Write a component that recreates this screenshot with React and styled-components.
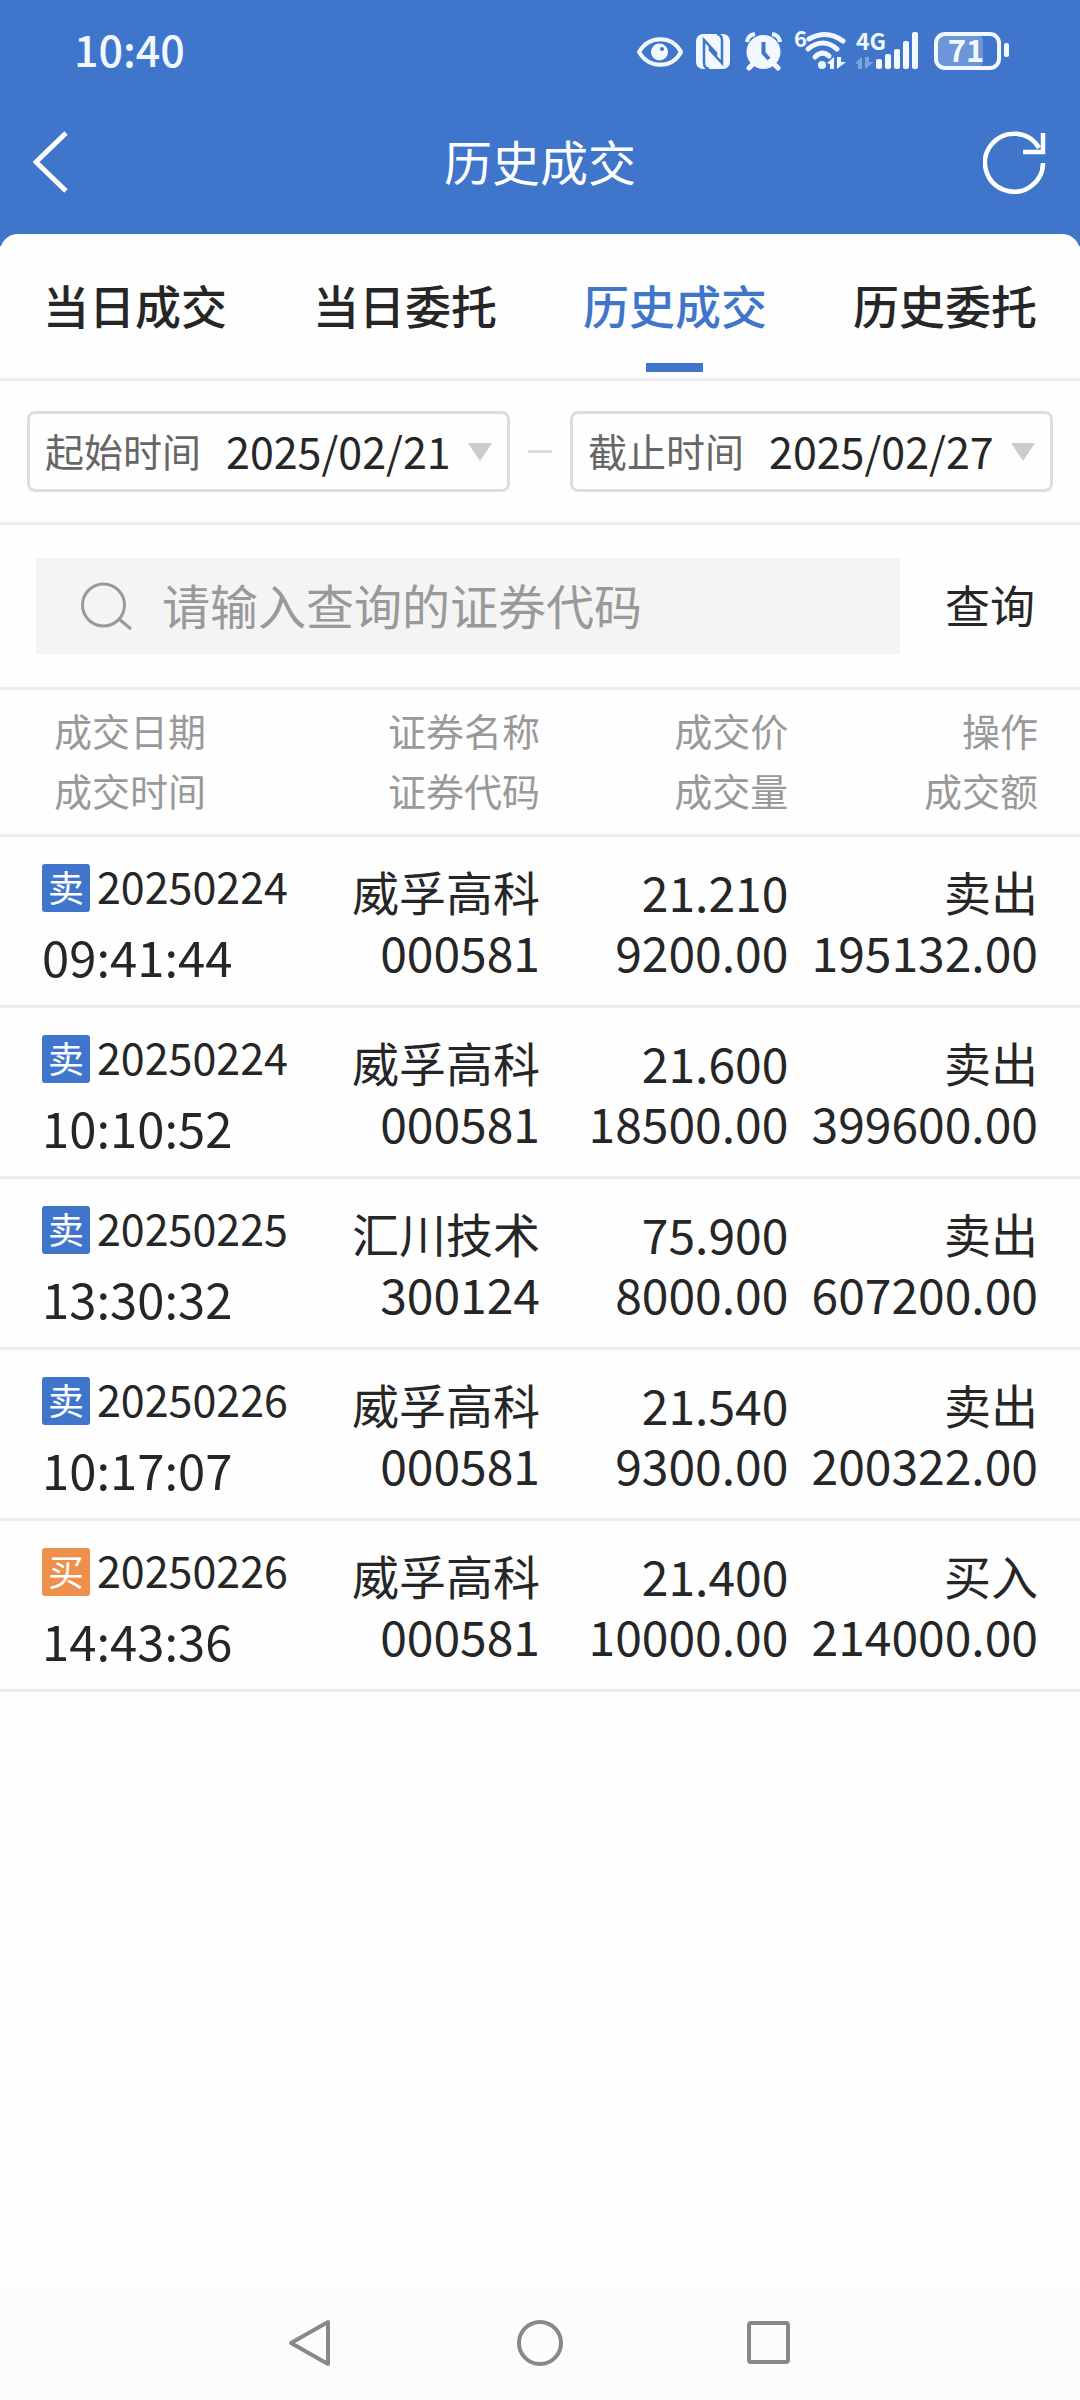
import React, { useState } from "react";
import styled, { createGlobalStyle } from "styled-components";

const blue = "#3f76cb";
const ink = "#262626";
const muted = "#999";
const line = "#ededed";
const statusInk = "#f2f8ff";
const sans = '"Noto Sans CJK SC", "Noto Sans", sans-serif';

const GlobalStyle = createGlobalStyle`
  *, *::before, *::after { box-sizing: border-box; }
  body { margin: 0; background: #fff; }
  button, input, select { margin: 0; padding: 0; border: 0; background: none; color: inherit; font: inherit; }
`;

const Page = styled.div`
  display: flex;
  flex-direction: column;
  min-height: 100vh;
  background: #fefefe;
  color: ${ink};
  font-family: ${sans};
`;

const Top = styled.header`
  padding-bottom: 24px;
  background: ${blue};
  color: #fff;
`;

const StatusBar = styled.div`
  display: flex;
  align-items: center;
  justify-content: space-between;
  height: 102px;
  padding: 0 71px 0 74px;
  color: ${statusInk};
`;

const Clock = styled.time`
  padding-bottom: 6px;
  font-size: 43px;
  font-weight: 500;
  line-height: 48px;
`;

const StatusIcons = styled.svg`
  display: block;
  width: 372px;
  height: 60px;
  font-family: ${sans};
  font-weight: 700;
`;

const TitleBar = styled.div`
  display: grid;
  grid-template-columns: 1fr auto 1fr;
  align-items: center;
  height: 120px;
  padding: 0 33px;
`;

const Title = styled.h1`
  margin: 0;
  padding-bottom: 4px;
  font-size: 48px;
  font-weight: 400;
  line-height: 60px;
`;

const IconButton = styled.button`
  display: block;
  justify-self: ${(p) => p.$side};
  cursor: pointer;
  svg { display: block; }
`;

const Sheet = styled.main`
  flex: 1;
  margin-top: -12px;
  border-radius: 18px 18px 0 0;
  background: #fefefe;
`;

const Tabs = styled.nav`
  display: grid;
  grid-template-columns: repeat(4, 1fr);
  height: 147px;
  border-bottom: 3px solid ${line};
`;

const Tab = styled.button`
  position: relative;
  padding-bottom: 4px;
  color: ${(p) => (p.$active ? blue : ink)};
  font-size: 46px;
  font-weight: 500;
  cursor: pointer;

  &::after {
    content: "";
    position: absolute;
    bottom: 6px;
    left: 50%;
    width: 57px;
    height: 9px;
    margin-left: -29px;
    background: ${(p) => (p.$active ? blue : "transparent")};
  }
`;

const DateRow = styled.div`
  display: flex;
  align-items: center;
  gap: 18px;
  padding: 30px 27px;
  border-bottom: 3px solid ${line};
`;

const Dash = styled.span`
  width: 24px;
  height: 3px;
  background: #ddd;
`;

const DateField = styled.div`
  display: flex;
  flex: 1;
  align-items: center;
  height: 81px;
  padding: 0 15px;
  border: 3px solid #ddd;
  border-radius: 8px;
  svg { display: block; flex: none; }
`;

const DateLabel = styled.label`
  padding: 0 25px 4px 0;
  color: #666;
  font-size: 39px;
  line-height: 60px;
  white-space: nowrap;
`;

const DateSelect = styled.select`
  flex: 1;
  min-width: 0;
  padding-bottom: 4px;
  appearance: none;
  font-size: 43px;
  line-height: 60px;
`;

const SearchRow = styled.form`
  display: flex;
  height: 165px;
  padding: 33px 0 33px 36px;
  border-bottom: 3px solid ${line};
`;

const SearchBox = styled.label`
  display: flex;
  flex: 1;
  align-items: center;
  gap: 29px;
  padding: 0 45px;
  background: #f4f4f4;
  svg { display: block; flex: none; }
`;

const SearchInput = styled.input`
  flex: 1;
  min-width: 0;
  height: 96px;
  padding-bottom: 4px;
  outline: 0;
  font-size: 48px;
  &::placeholder { color: ${muted}; opacity: 1; }
`;

const QueryButton = styled.button`
  width: 180px;
  padding-bottom: 4px;
  font-size: 45px;
  cursor: pointer;
`;

const Table = styled.table`
  width: 100%;
  border-collapse: separate;
  border-spacing: 0;
  table-layout: fixed;
`;

const Col = styled.col`
  width: ${(p) => p.$width};
`;

const HeadCell = styled.th`
  padding: ${(p) => (p.$first ? "10px 0 14px 54px" : "10px 0 14px")};
  border-bottom: 3px solid ${line};
  color: ${muted};
  font-size: 38px;
  font-weight: 400;
  line-height: 60px;
  text-align: ${(p) => (p.$first ? "left" : "right")};
  &:last-child { padding-right: 42px; }
`;

const Cell = styled.td`
  padding: 24px 0;
  border-bottom: 3px solid ${line};
  font-size: 48px;
  line-height: 60px;
  text-align: right;
  vertical-align: top;
  white-space: nowrap;
  &:last-child { padding-right: 42px; }
`;

const WhenCell = styled(Cell)`
  padding: 27px 0 18px 42px;
  text-align: left;
`;

const Line = styled.div`
  font-size: ${(p) => p.$size || 48}px;
`;

const DateLine = styled.div`
  display: flex;
  gap: 7px;
  height: 48px;
  margin-bottom: 14px;
  font-size: 43px;
  line-height: 42px;
`;

const Badge = styled.span`
  width: 48px;
  height: 48px;
  border-radius: 3px;
  background: ${(p) => (p.$buy ? "#ee8f4b" : blue)};
  color: #fff;
  font-size: 36px;
  line-height: 44px;
  text-align: center;
`;

const NavBar = styled.nav`
  display: flex;
  align-items: center;
  justify-content: center;
  gap: 181px;
  height: 114px;
  background: #fcfcfc;
`;

const trades = [
  { date: "20250224", time: "09:41:44", name: "威孚高科", code: "000581", price: "21.210", volume: "9200.00", amount: "195132.00" },
  { date: "20250224", time: "10:10:52", name: "威孚高科", code: "000581", price: "21.600", volume: "18500.00", amount: "399600.00" },
  { date: "20250225", time: "13:30:32", name: "汇川技术", code: "300124", price: "75.900", volume: "8000.00", amount: "607200.00" },
  { date: "20250226", time: "10:17:07", name: "威孚高科", code: "000581", price: "21.540", volume: "9300.00", amount: "200322.00" },
  { date: "20250226", time: "14:43:36", name: "威孚高科", code: "000581", price: "21.400", volume: "10000.00", amount: "214000.00", buy: true },
];

const heads = [
  ["成交日期", "成交时间"],
  ["证券名称", "证券代码"],
  ["成交价", "成交量"],
  ["操作", "成交额"],
];

function PhoneStatus() {
  return (
    <StatusIcons viewBox="0 -10 372 60" fill={statusInk} role="img" aria-label="手机状态">
      <path d="M2 21C12 4 35 4 44 21C35 38 12 38 2 21Z" fill="none" stroke={statusInk} strokeWidth="4" strokeLinejoin="round" />
      <circle cx="22.500" cy="21" r="8.500" />
      <circle cx="25" cy="18" r="2" fill={blue} />

      <rect x="59" y="3" width="34" height="35" rx="7" />
      <path d="M72 38Q67 37 67 32V9L79 22V26M80 3Q85 4 85 9V32L73 19V15" fill="none" stroke={blue} strokeWidth="2.500" />

      <circle cx="126.500" cy="21" r="17" />
      <path d="M110 11Q111 4 118 3M135 3Q142 4 143 11" fill="none" stroke={statusInk} strokeWidth="4" />
      <path d="M115 34L112 37M138 34L141 37" stroke={statusInk} strokeWidth="5" strokeLinecap="round" />
      <path d="M126.500 11V22L132 28" fill="none" stroke={blue} strokeWidth="4" />

      <text x="157" y="16" fontSize="22">6</text>
      <g fill="none" stroke={statusInk} strokeWidth="5" strokeLinecap="round">
        <path d="M172 8Q190 -2 206 10M171 18Q186 6 200 18M178 26Q185 19 192 25" />
      </g>
      <circle cx="185" cy="34" r="4" />
      <path d="M190 32L197 26V38H193V33ZM200 26H204V31H209L200 38Z" />

      <text x="219" y="19" fontSize="23">4G</text>
      <path d="M218 32L225 26V38H221V33ZM228 26H232V31H237L228 38Z" opacity="0.35" />
      <rect x="239" y="28" width="6" height="10" rx="2" />
      <rect x="248" y="23" width="6" height="15" rx="2" />
      <rect x="257" y="18" width="6" height="20" rx="2" />
      <rect x="266" y="10" width="6" height="28" rx="2" />
      <rect x="275" y="1" width="6" height="37" rx="2" />

      <rect x="298" y="3" width="48" height="34" rx="7" opacity="0.25" />
      <rect x="299" y="3" width="63" height="34" rx="9" fill="none" stroke={statusInk} strokeWidth="4" />
      <rect x="367" y="12" width="5" height="14" rx="2" />
      <text x="329" y="31" fontSize="31" textAnchor="middle">71</text>
    </StatusIcons>
  );
}

function DatePicker({ id, label, value }) {
  return (
    <DateField>
      <DateLabel htmlFor={id}>{label}</DateLabel>
      <DateSelect id={id} defaultValue={value}>
        <option>{value}</option>
      </DateSelect>
      <svg width="24" height="18" viewBox="0 0 24 18" aria-hidden="true">
        <path d="M0 0H24L12 18Z" fill="#ccc" />
      </svg>
    </DateField>
  );
}

function TradeRow({ trade }) {
  return (
    <tr>
      <WhenCell>
        <DateLine>
          <Badge $buy={trade.buy}>{trade.buy ? "买" : "卖"}</Badge>
          <span>{trade.date}</span>
        </DateLine>
        <Line $size={49}>{trade.time}</Line>
      </WhenCell>
      <Cell>
        <Line $size={47}>{trade.name}</Line>
        <Line>{trade.code}</Line>
      </Cell>
      <Cell>
        <Line>{trade.price}</Line>
        <Line>{trade.volume}</Line>
      </Cell>
      <Cell>
        <Line $size={47}>{trade.buy ? "买入" : "卖出"}</Line>
        <Line>{trade.amount}</Line>
      </Cell>
    </tr>
  );
}

export default function App() {
  const [tab, setTab] = useState("历史成交");
  return (
    <Page>
      <GlobalStyle />
      <Top>
        <StatusBar>
          <Clock>10:40</Clock>
          <PhoneStatus />
        </StatusBar>
        <TitleBar>
          <IconButton $side="start" aria-label="返回">
            <svg width="36" height="62" viewBox="0 0 36 62" fill="none" stroke="#fff" strokeWidth="5">
              <path d="M33 2L3 31L33 60" />
            </svg>
          </IconButton>
          <Title>历史成交</Title>
          <IconButton $side="end" aria-label="刷新">
            <svg width="64" height="64" viewBox="0 0 64 64" fill="none" stroke="#fff" strokeWidth="4.500">
              <path d="M60 33A29 29 0 1 1 56 18" />
              <path d="M60 3V22H40" />
            </svg>
          </IconButton>
        </TitleBar>
      </Top>
      <Sheet>
        <Tabs>
          {["当日成交", "当日委托", "历史成交", "历史委托"].map((name) => (
            <Tab key={name} $active={name === tab} onClick={() => setTab(name)}>{name}</Tab>
          ))}
        </Tabs>
        <DateRow>
          <DatePicker id="start" label="起始时间" value="2025/02/21" />
          <Dash />
          <DatePicker id="end" label="截止时间" value="2025/02/27" />
        </DateRow>
        <SearchRow onSubmit={(e) => e.preventDefault()}>
          <SearchBox>
            <svg width="52" height="50" viewBox="0 0 52 50" fill="none" stroke={muted} strokeWidth="3">
              <circle cx="22.500" cy="24" r="21" />
              <path d="M38 38L50 48" />
            </svg>
            <SearchInput placeholder="请输入查询的证券代码" aria-label="证券代码" />
          </SearchBox>
          <QueryButton type="submit">查询</QueryButton>
        </SearchRow>
        <Table>
          <colgroup>
            <Col $width="27%" />
            <Col $width="23%" />
            <Col $width="23%" />
            <Col $width="27%" />
          </colgroup>
          <thead>
            <tr>
              {heads.map(([upper, lower], i) => (
                <HeadCell key={upper} $first={i === 0} scope="col">
                  <div>{upper}</div>
                  <div>{lower}</div>
                </HeadCell>
              ))}
            </tr>
          </thead>
          <tbody>
            {trades.map((trade) => <TradeRow key={trade.time} trade={trade} />)}
          </tbody>
        </Table>
      </Sheet>
      <NavBar aria-label="系统导航">
        <IconButton aria-label="后退">
          <svg width="48" height="48" viewBox="0 0 48 48" fill="none" stroke="#888" strokeWidth="4" strokeLinejoin="round">
            <path d="M41 3V45L4 24Z" />
          </svg>
        </IconButton>
        <IconButton aria-label="主屏幕">
          <svg width="48" height="48" viewBox="0 0 48 48" fill="none" stroke="#888" strokeWidth="4">
            <circle cx="24" cy="24" r="21" />
          </svg>
        </IconButton>
        <IconButton aria-label="最近任务">
          <svg width="48" height="48" viewBox="0 0 48 48" fill="none" stroke="#888" strokeWidth="4">
            <rect x="4" y="4" width="39" height="39" rx="2" />
          </svg>
        </IconButton>
      </NavBar>
    </Page>
  );
}
